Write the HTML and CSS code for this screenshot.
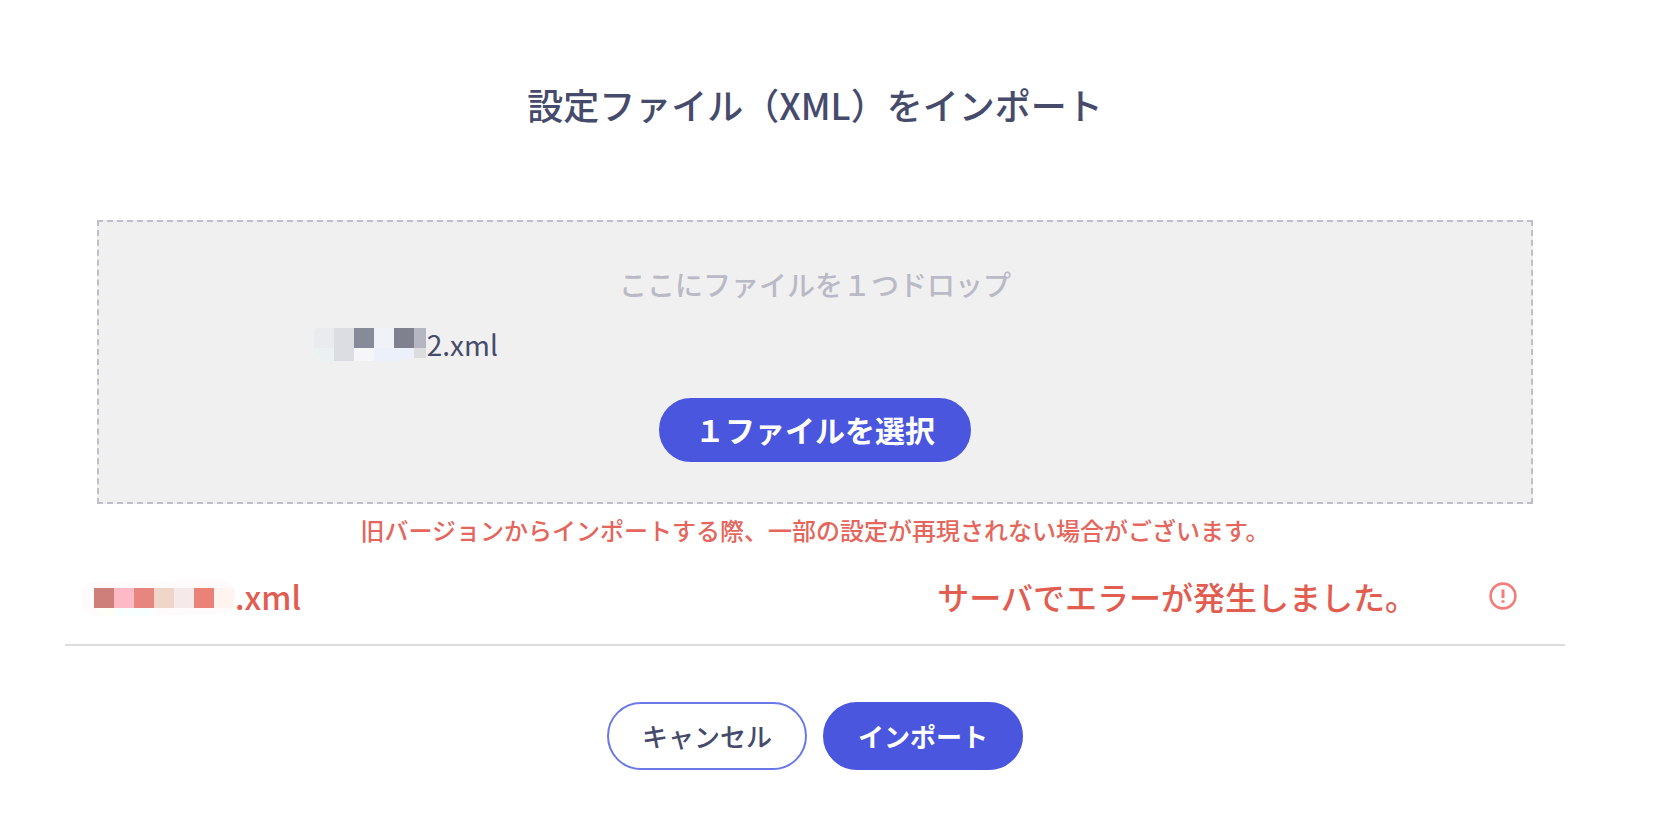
FILE: index.html
```html
<!DOCTYPE html>
<html lang="ja">
<head>
    <meta charset="UTF-8">
    <meta name="viewport" content="width=device-width, initial-scale=1.0">
    <title>設定ファイル（XML）をインポート</title>
    <link rel="stylesheet" href="styles.css">
</head>
<body>
    <main class="import-dialog">
        <h1>設定ファイル（XML）をインポート</h1>

        <section class="drop-area">
            <p class="drop-hint">ここにファイルを１つドロップ</p>
            <div class="selected-file">
                <svg class="mask" width="113" height="34" viewBox="1 -1 113 34" shape-rendering="crispEdges" aria-hidden="true">
                    <path fill="#e9ebef" d="M3 0h18v20H0V3z"/>
                    <path fill="#ebf0f3" d="M0 20h21v13H9z"/>
                    <rect fill="#dcdce3" x="21" width="20" height="34"/>
                    <rect fill="#868a99" x="41" width="20" height="20"/>
                    <rect fill="#f6f6f9" x="41" y="20" width="20" height="14"/>
                    <rect fill="#f0f2f8" x="61" width="20" height="20"/>
                    <path fill="#ecf0fa" d="M61 20h40v10l-20 3H61z"/>
                    <rect fill="#7f828e" x="81" width="20" height="20"/>
                    <rect fill="#b6b5c2" x="101" width="12" height="20"/>
                    <rect fill="#dcdcdc" x="101" y="20" width="12" height="10"/>
                </svg>
                <span>2.xml</span>
            </div>
            <button type="button" class="btn btn-primary btn-select">１ファイルを選択</button>
        </section>

        <p class="notice">旧バージョンからインポートする際、一部の設定が再現されない場合がございます。</p>

        <div class="result-row">
            <div class="result-file">
                <svg class="mask" width="154" height="40" viewBox="1 -2 154 40" aria-hidden="true">
                    <path fill="#fffafb" d="M20 4L120 3Q155 -4 156 20Q155 38 130 36L20 39Q0 37 0 21T20 4z"/>
                    <path fill="#fffffa" d="M14 30h20v8H20z"/>
                    <path fill="#f8ffff" d="M34 30h40v8H34z"/>
                    <rect fill="#ce7f79" x="14" y="10" width="20" height="20"/>
                    <rect fill="#fdb9c5" x="34" y="10" width="20" height="20"/>
                    <rect fill="#e7857f" x="54" y="10" width="20" height="20"/>
                    <rect fill="#f0d6c8" x="74" y="10" width="20" height="20"/>
                    <rect fill="#f5eae9" x="94" y="10" width="20" height="20"/>
                    <rect fill="#ea8279" x="114" y="10" width="20" height="20"/>
                    <rect fill="#fff4ef" x="134" y="10" width="20" height="20"/>
                </svg>
                <span>.xml</span>
            </div>
            <p class="result-message">サーバでエラーが発生しました。</p>
            <svg class="error-icon" width="28" height="28" viewBox="0 0 28 28" aria-hidden="true">
                <circle cx="14" cy="14" r="12.4" fill="none" stroke="#f27d7a" stroke-width="2.6"/>
                <path d="M14 7.5v8.5M14 18.2v2.6" stroke="#f27d7a" stroke-width="3"/>
            </svg>
        </div>

        <div class="actions">
            <button type="button" class="btn btn-outline">キャンセル</button>
            <button type="button" class="btn btn-primary">インポート</button>
        </div>
    </main>
</body>
</html>
```
FILE: styles.css
```css
* {
    margin: 0;
    padding: 0;
    box-sizing: border-box;
}

body {
    background-color: #fff;
    color: #464b6c;
    font-family: 'Noto Sans CJK JP', sans-serif;
}

.import-dialog {
    padding: 78px 93px 60px 65px;
}

h1 {
    margin-bottom: 90px;
    font-size: 36px;
    font-weight: 500;
    line-height: 52px;
    text-align: center;
}

.drop-area {
    display: flex;
    flex-direction: column;
    align-items: center;
    margin: 0 32px;
    padding: 42px 0 40px;
    border: 2px dashed #bfbecb;
    background-color: #f0f0f0;
}

.drop-hint {
    margin-bottom: 20px;
    color: #bab9c6;
    font-size: 28px;
    font-weight: 500;
    line-height: 40px;
}

.selected-file {
    display: flex;
    align-items: center;
    width: 70%;
    margin-bottom: 34px;
    font-size: 28px;
    line-height: 40px;
}

.mask {
    flex: none;
}

.btn {
    min-width: 200px;
    height: 68px;
    padding-bottom: 2px;
    border: 2px solid #4956dd;
    border-radius: 34px;
    font-family: inherit;
    font-size: 26px;
    font-weight: 500;
    cursor: pointer;
}

.btn-primary {
    background-color: #4956dd;
    color: #fff;
    font-weight: 700;
}

.btn-outline {
    border-color: #6b78e8;
    background-color: #fff;
    color: #464b6c;
}

.btn-select {
    min-width: 312px;
    height: 64px;
    font-size: 30px;
}

.notice {
    margin-top: 8px;
    color: #e4665c;
    font-size: 24px;
    font-weight: 500;
    line-height: 36px;
    text-align: center;
}

.result-row {
    display: flex;
    align-items: center;
    min-height: 98px;
    padding: 0 48px 0 16px;
    border-bottom: 2px solid #dcdce1;
    color: #e25c50;
    font-size: 32px;
    font-weight: 500;
    line-height: 48px;
}

.result-file {
    display: flex;
    flex: 1;
    align-items: center;
}

.error-icon {
    flex: none;
    margin-left: 72px;
}

.actions {
    display: flex;
    justify-content: center;
    gap: 16px;
    margin-top: 56px;
}
```
